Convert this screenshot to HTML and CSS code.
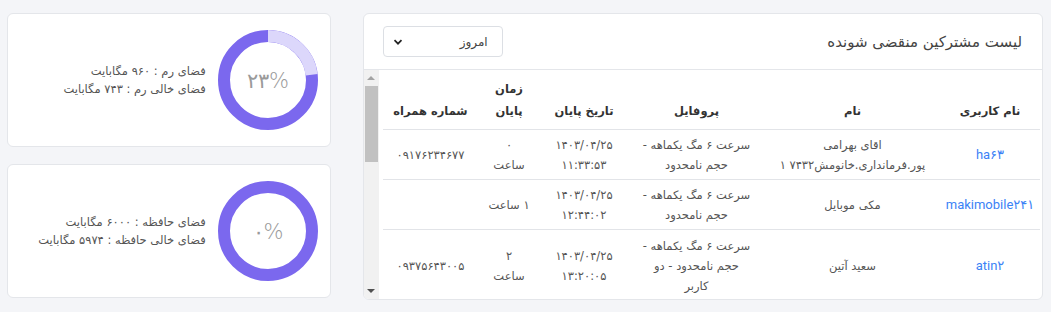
FILE: index.html
```html
<!DOCTYPE html>
<html lang="fa" dir="rtl">
<head>
  <meta charset="UTF-8" />
  <title>داشبورد</title>
  <link rel="stylesheet" href="styles.css">
</head>
<body>
  <div class="page">

    <!-- لیست مشترکین -->
    <div class="card expiring">
      <div class="card-header">
        <div class="card-title">لیست مشترکین منقضی شونده</div>
        <div class="select-box">
          <span>امروز</span>
          <svg width="10" height="10" viewBox="0 0 10 10"><path d="M1.5 3.2 L5 6.7 L8.5 3.2" fill="none" stroke="#222" stroke-width="1.7"/></svg>
        </div>
      </div>

      <div class="table-wrap">
        <table class="users">
          <colgroup>
            <col style="width:100px"><col style="width:175px"><col style="width:137px">
            <col style="width:88px"><col style="width:62px"><col style="width:95px">
          </colgroup>
          <thead>
            <tr>
              <th>نام کاربری</th>
              <th>نام</th>
              <th>پروفایل</th>
              <th>تاریخ پایان</th>
              <th>زمان<br>پایان</th>
              <th>شماره همراه</th>
            </tr>
          </thead>
          <tbody>
            <tr>
              <td><a href="#">ha۶۳</a></td>
              <td>اقای بهرامی<br>پور.فرمانداری.خانومش۷۴۳۲ ۱</td>
              <td>سرعت ۶ مگ یکماهه -<br>حجم نامحدود</td>
              <td>۱۴۰۳/۰۴/۲۵<br>۱۱:۳۳:۵۳</td>
              <td>۰<br>ساعت</td>
              <td>۰۹۱۷۶۲۳۴۶۷۷</td>
            </tr>
            <tr>
              <td><a href="#">makimobile۲۴۱</a></td>
              <td>مکی موبایل</td>
              <td>سرعت ۶ مگ یکماهه -<br>حجم نامحدود</td>
              <td>۱۴۰۳/۰۴/۲۵<br>۱۲:۴۴:۰۲</td>
              <td>۱ ساعت</td>
              <td></td>
            </tr>
            <tr class="last">
              <td><a href="#">atin۲</a></td>
              <td>سعید آتین</td>
              <td>سرعت ۶ مگ یکماهه -<br>حجم نامحدود - دو<br>کاربر</td>
              <td>۱۴۰۳/۰۴/۲۵<br>۱۳:۲۰:۰۵</td>
              <td>۲<br>ساعت</td>
              <td>۰۹۳۷۵۶۴۳۰۰۵</td>
            </tr>
          </tbody>
        </table>

        <!-- اسکرول بار -->
        <div class="scrollbar">
          <div class="sb-btn"><span class="arrow-up"></span></div>
          <div class="sb-track"><div class="sb-thumb"></div></div>
          <div class="sb-btn"><span class="arrow-down"></span></div>
        </div>
      </div>
    </div>

    <!-- ستون کارت‌های منابع -->
    <div class="side">
      <div class="card stat">
        <svg class="donut" width="100" height="100" viewBox="0 0 100 100">
          <circle cx="50" cy="50" r="44" fill="none" stroke="#7b68ee" stroke-width="12"/>
          <circle cx="50" cy="50" r="44" fill="none" stroke="#dcd7fb" stroke-width="12"
                  stroke-dasharray="63.6 300" transform="rotate(-90 50 50)"/>
          <text x="50" y="58" text-anchor="middle" class="donut-text">۲۳%</text>
        </svg>
        <div class="stat-text">
          <div>فضای رم : ۹۶۰ مگابایت</div>
          <div>فضای خالی رم : ۷۴۳ مگابایت</div>
        </div>
      </div>

      <div class="card stat">
        <svg class="donut" width="100" height="100" viewBox="0 0 100 100">
          <circle cx="50" cy="50" r="44" fill="none" stroke="#7b68ee" stroke-width="12"/>
          <text x="50" y="58" text-anchor="middle" class="donut-text">۰%</text>
        </svg>
        <div class="stat-text">
          <div>فضای حافظه : ۶۰۰۰ مگابایت</div>
          <div>فضای خالی حافظه : ۵۹۷۴ مگابایت</div>
        </div>
      </div>
    </div>

  </div>
</body>
</html>
```

FILE: styles.css
```css
body {
  margin: 0;
  padding: 0;
  font-family: "DejaVu Sans", sans-serif;
  background-color: #f4f5f8;
  color: #555;
}

.page {
  display: flex;
  gap: 32px;
  padding: 13px 8px 0 7px;
}

.card {
  background-color: #ffffff;
  border: 1px solid #e4e6ea;
  border-radius: 6px;
  box-sizing: border-box;
}

/* کارت لیست مشترکین */
.expiring {
  width: 681px;
  height: 287px;
  display: flex;
  flex-direction: column;
  overflow: hidden;
}

.card-header {
  height: 56px;
  flex-shrink: 0;
  box-sizing: border-box;
  border-bottom: 1px solid #e4e6ea;
  display: flex;
  align-items: center;
  justify-content: space-between;
  padding: 0 20px 0 19px;
}

.card-title {
  font-size: 15px;
  color: #444;
}

.select-box {
  width: 120px;
  height: 31px;
  box-sizing: border-box;
  border: 1px solid #dcdfe4;
  border-radius: 4px;
  display: flex;
  align-items: center;
  justify-content: space-between;
  padding: 0 14px 0 9px;
  font-size: 12px;
  color: #444;
}

.table-wrap {
  flex: 1;
  display: flex;
  align-items: flex-start;
  justify-content: space-between;
  overflow: hidden;
  padding-right: 2px;
}

.users {
  width: 657px;
  table-layout: fixed;
  border-collapse: collapse;
  font-size: 11.5px;
  line-height: 20px;
}

.users th {
  font-weight: bold;
  color: #333;
  line-height: 22px;
  padding: 8px 4px 7px;
  text-align: center;
  vertical-align: bottom;
  border-bottom: 1px solid #e2e4e8;
}

.users td {
  padding: 5px 4px 4px;
  text-align: center;
  vertical-align: middle;
  border-bottom: 1px solid #e2e4e8;
  white-space: nowrap;
}

.users tr.last td {
  padding-top: 6px;
  border-bottom: none;
}

.users td a {
  color: #3b82f6;
  text-decoration: none;
  font-family: "Roboto", "DejaVu Sans", sans-serif;
  font-size: 13px;
}

/* اسکرول بار */
.scrollbar {
  width: 15px;
  align-self: stretch;
  background-color: #f1f1f1;
  display: flex;
  flex-direction: column;
}

.sb-btn {
  height: 16px;
  display: flex;
  align-items: center;
  justify-content: center;
}

.arrow-up {
  border-left: 4px solid transparent;
  border-right: 4px solid transparent;
  border-bottom: 4px solid #a3a3a3;
}

.arrow-down {
  border-left: 4px solid transparent;
  border-right: 4px solid transparent;
  border-top: 4px solid #505050;
}

.sb-track {
  flex: 1;
  padding: 0 1px;
}

.sb-thumb {
  height: 76px;
  background-color: #c1c1c1;
}

/* کارت‌های منابع */
.side {
  width: 324px;
  display: flex;
  flex-direction: column;
  gap: 17px;
}

.stat {
  height: 134px;
  display: flex;
  align-items: center;
  padding: 0 12px 0 12px;
  gap: 12px;
}

.donut-text {
  font-family: "DejaVu Sans", sans-serif;
  font-size: 21px;
  font-weight: 300;
  fill: #9a9a9a;
}

.stat-text {
  font-size: 11.5px;
  line-height: 18px;
  color: #555;
}
```
